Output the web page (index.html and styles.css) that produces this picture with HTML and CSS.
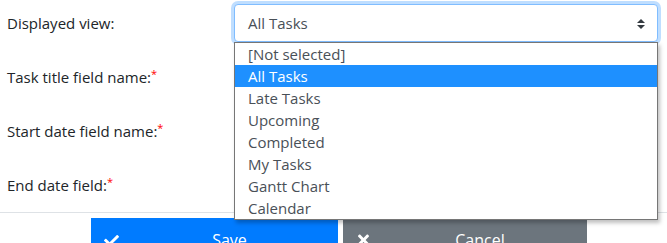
FILE: index.html
```html
<!DOCTYPE html>
<html lang="en">
<head>
    <meta charset="UTF-8">
    <title>View settings</title>
    <link rel="stylesheet" href="styles.css">
</head>
<body>
    <form class="settings">
        <div class="form-row">
            <label class="form-label">Displayed view:</label>
            <div class="form-control-wrap">
                <div class="select focused">
                    <span>All Tasks</span>
                    <svg class="select-arrow" width="8" height="10" viewBox="0 0 4 5"><path fill="#343a40" d="M2 0L0 2h4zm0 5L0 3h4z"/></svg>
                </div>
                <ul class="options">
                    <li>[Not selected]</li>
                    <li class="active">All Tasks</li>
                    <li>Late Tasks</li>
                    <li>Upcoming</li>
                    <li>Completed</li>
                    <li>My Tasks</li>
                    <li>Gantt Chart</li>
                    <li>Calendar</li>
                </ul>
            </div>
        </div>
        <div class="form-row">
            <label class="form-label">Task title field name:<span class="req">*</span></label>
            <div class="form-control-wrap"><div class="select"></div></div>
        </div>
        <div class="form-row">
            <label class="form-label">Start date field name:<span class="req">*</span></label>
            <div class="form-control-wrap"><div class="select"></div></div>
        </div>
        <div class="form-row">
            <label class="form-label">End date field:<span class="req">*</span></label>
            <div class="form-control-wrap"><div class="select"></div></div>
        </div>

        <div class="form-footer">
            <button type="submit" class="btn btn-primary">
                <span class="btn-icon">
                    <svg width="15" height="15" viewBox="0 0 512 512"><path fill="#fff" d="M173.898 439.404l-166.4-166.4c-9.997-9.997-9.997-26.206 0-36.204l36.203-36.204c9.997-9.998 26.207-9.998 36.204 0L192 312.69 432.095 72.596c9.997-9.997 26.207-9.997 36.204 0l36.203 36.204c9.997 9.997 9.997 26.206 0 36.204l-294.4 294.401c-9.998 9.997-26.207 9.997-36.204-.001z"/></svg>
                </span>
                <span class="btn-text">Save</span>
            </button>
            <button type="button" class="btn btn-secondary">
                <span class="btn-icon">
                    <svg width="11" height="16" viewBox="0 0 352 512"><path fill="#fff" d="M242.72 256l100.07-100.07c12.28-12.28 12.28-32.19 0-44.48l-22.24-22.240c-12.28-12.28-32.19-12.28-44.48 0L176 189.28 75.93 89.21c-12.28-12.28-32.19-12.28-44.48 0L9.21 111.45c-12.28 12.28-12.28 32.19 0 44.48L109.28 256 9.21 356.07c-12.28 12.28-12.28 32.19 0 44.48l22.24 22.24c12.28 12.28 32.2 12.28 44.48 0L176 322.72l100.07 100.07c12.28 12.28 32.2 12.28 44.48 0l22.24-22.24c12.28-12.28 12.28-32.19 0-44.48L242.72 256z"/></svg>
                </span>
                <span class="btn-text">Cancel</span>
            </button>
        </div>
    </form>
</body>
</html>
```

FILE: styles.css
```css
body {
    margin: 0;
    font-family: "Open Sans", "Noto Sans", sans-serif;
    font-size: 15px;
    color: #212529;
    background-color: #fff;
    overflow: hidden;
}
.settings {
    padding-top: 4px;
}
.form-row {
    display: grid;
    grid-template-columns: 227px 424px;
    padding-left: 7px;
    margin-bottom: 16px;
}
.form-row:nth-child(4) {
    margin-bottom: 0;
}
.form-label {
    display: flex;
    align-items: center;
    height: 38px;
}
.req {
    color: #ff0000;
    font-size: 11px;
    align-self: flex-start;
    margin-top: 8px;
}
.form-control-wrap {
    position: relative;
}
.select {
    display: flex;
    align-items: center;
    justify-content: space-between;
    box-sizing: border-box;
    height: 38px;
    padding: 0 12px 0 13px;
    border: 1px solid #ced4da;
    border-radius: 4px;
    color: #495057;
    background-color: #fff;
}
.select.focused {
    border-color: #80bdff;
    box-shadow: 0 0 0 3px rgba(0, 123, 255, 0.25);
}
.select-arrow {
    margin-top: 1px;
}
.options {
    position: absolute;
    top: 38px;
    left: 0;
    z-index: 10;
    box-sizing: border-box;
    width: 424px;
    margin: 0;
    padding: 0;
    list-style: none;
    border: 1px solid #767676;
    background-color: #fff;
    color: #495057;
    box-shadow: 2px 3px 4px rgba(0, 0, 0, 0.25);
}
.options li {
    height: 22px;
    line-height: 22px;
    padding-left: 13px;
}
.options li.active {
    background-color: #1e90ff;
    color: #fff;
}
.form-footer {
    display: flex;
    gap: 5px;
    margin-top: 8px;
    padding: 5px 0 0 91px;
    border-top: 1px solid #dee2e6;
}
.btn {
    display: flex;
    align-items: center;
    height: 44px;
    padding: 0 0 0 10px;
    border: none;
    border-radius: 0;
    font-family: inherit;
    font-size: 16px;
    color: #fff;
    cursor: pointer;
}
.btn-primary {
    width: 247px;
    background-color: #007bff;
}
.btn-secondary {
    width: 244px;
    background-color: #6c757d;
}
.btn-icon {
    display: flex;
    justify-content: center;
    width: 20px;
}
.btn-text {
    flex: 1;
    text-align: center;
}
```
